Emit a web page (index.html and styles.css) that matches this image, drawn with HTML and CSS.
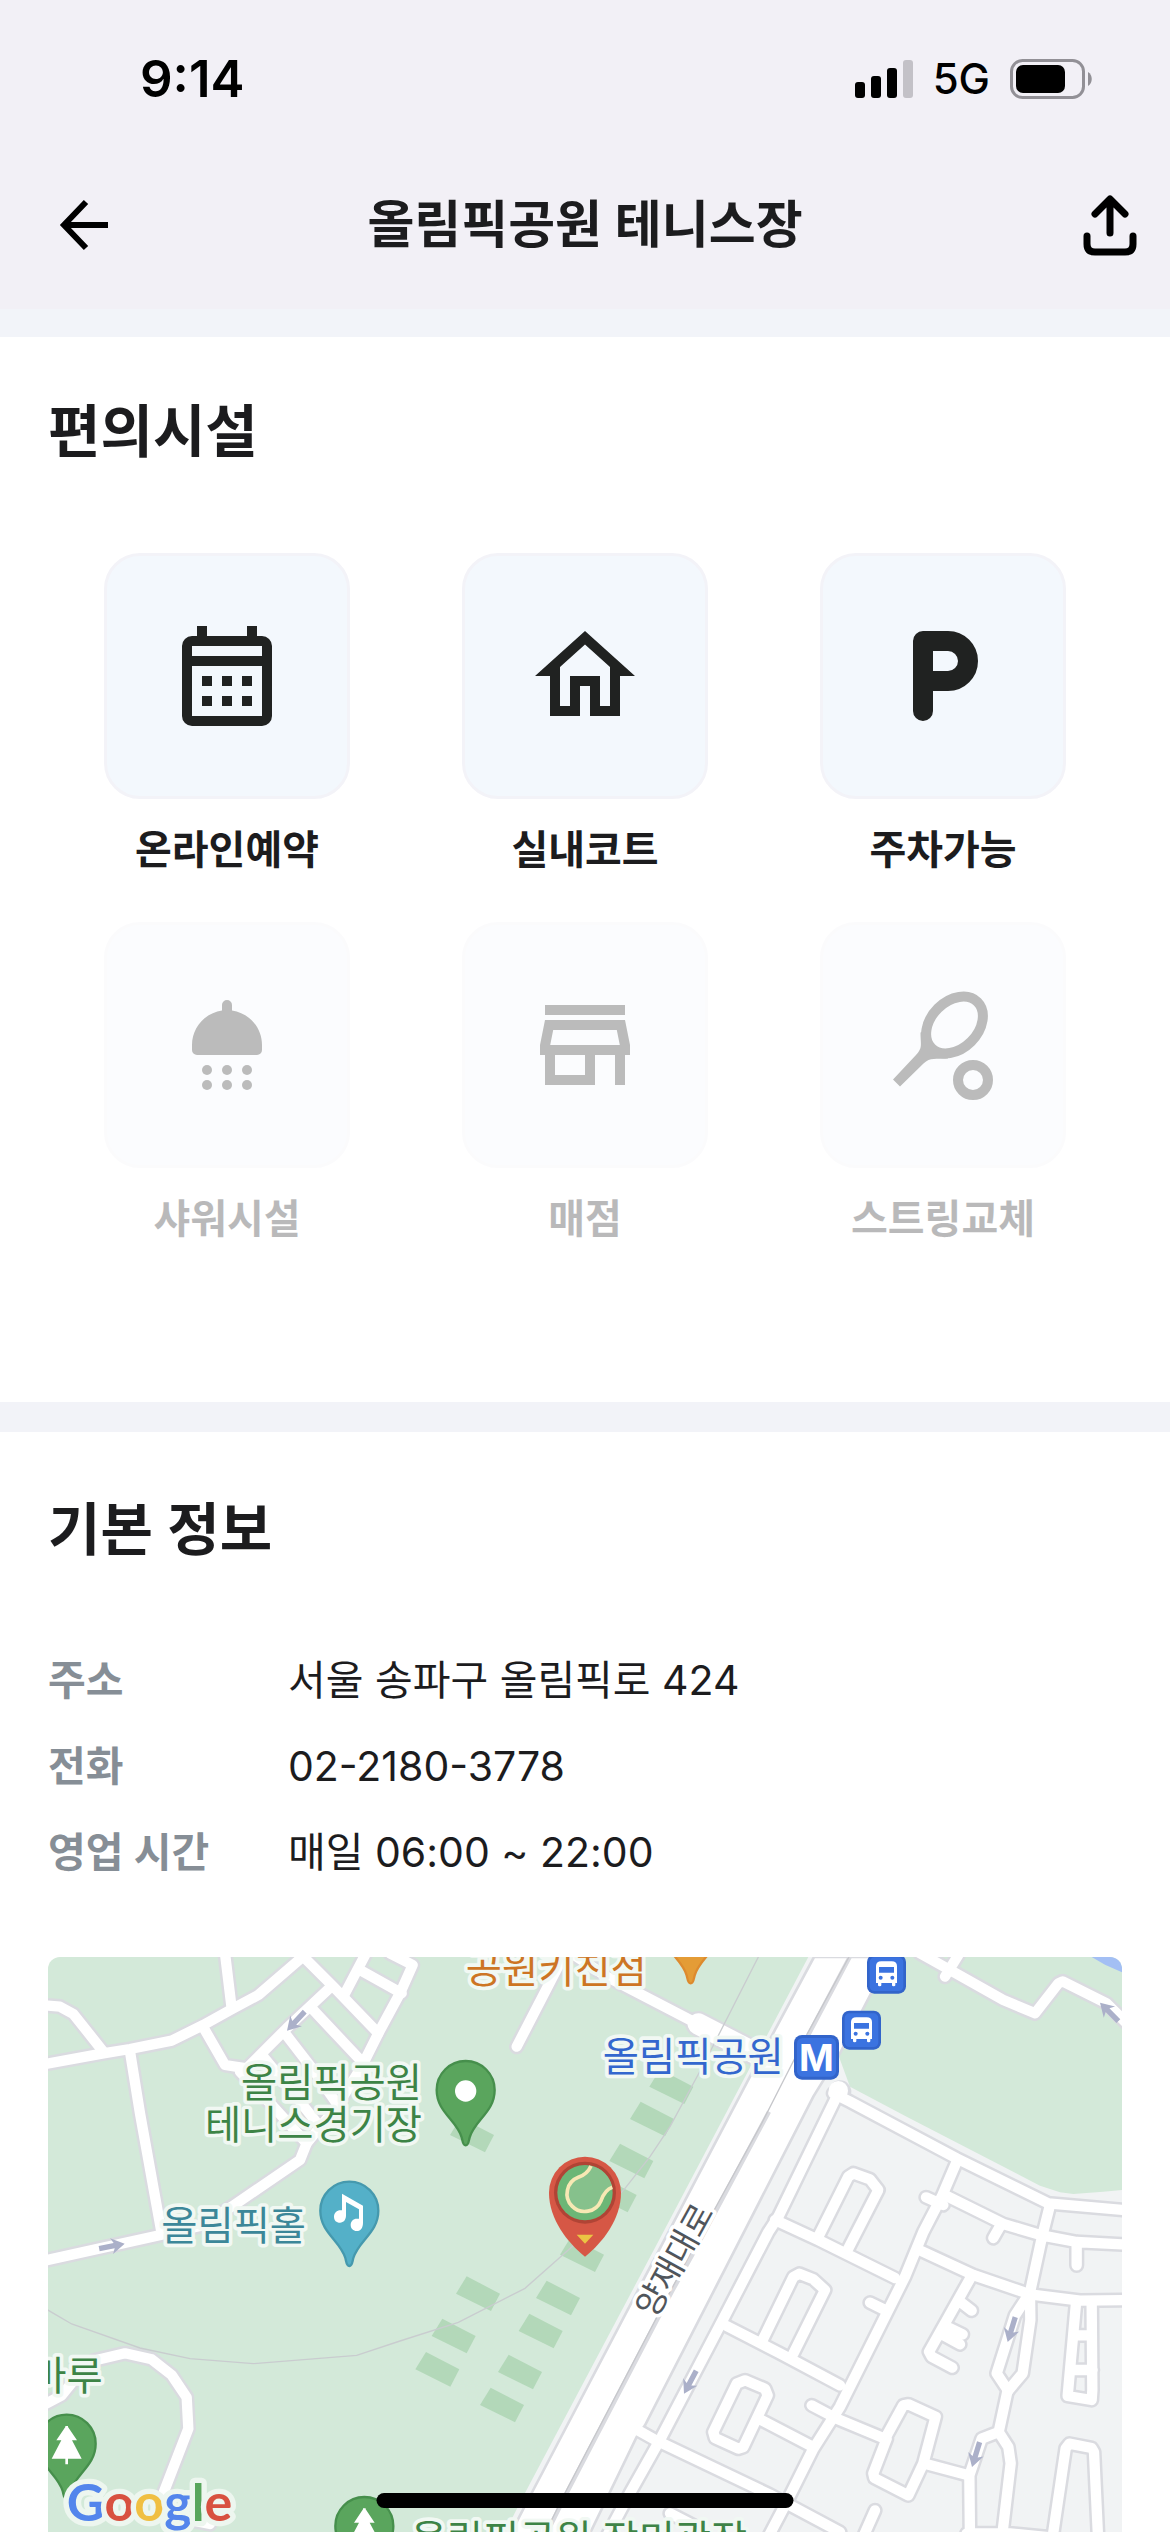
FILE: index.html
```html
<!DOCTYPE html>
<html lang="ko">
<head>
<meta charset="utf-8">
<meta name="viewport" content="width=device-width, initial-scale=1">
<title>올림픽공원 테니스장</title>
<link rel="stylesheet" href="styles.css">
</head>
<body>
<div class="status">
  <span class="time">9:14</span>
  <div class="indicators">
    <svg class="signal" viewBox="0 0 58 38" aria-hidden="true">
      <rect x="0" y="22" width="10" height="16" rx="3"/>
      <rect x="16" y="16" width="10" height="22" rx="3"/>
      <rect x="32" y="8" width="10" height="30" rx="3"/>
      <rect x="48" y="0" width="10" height="38" rx="3" fill="#c3c1c7"/>
    </svg>
    <span class="network">5G</span>
    <svg class="battery" viewBox="0 0 82 40" aria-hidden="true">
      <rect x="1.5" y="1.5" width="72" height="37" rx="11" fill="none" stroke="#929096" stroke-width="3"/>
      <rect x="6" y="6" width="49" height="28" rx="7"/>
      <path d="M78 13c5 3 5 11 0 14z" fill="#929096"/>
    </svg>
  </div>
</div>
<header class="nav">
  <button class="nav-button" aria-label="뒤로">
    <svg viewBox="0 0 56 56" fill="none" stroke="#000" stroke-width="6"><path d="M52 28H8M30 5 8 28l22 23"/></svg>
  </button>
  <h1>올림픽공원 테니스장</h1>
  <button class="nav-button share" aria-label="공유">
    <svg viewBox="0 0 56 62" fill="none" stroke="#000" stroke-width="7" stroke-linecap="round" stroke-linejoin="round"><path d="M28 39V6M13 20 28 5l15 15M5 42v8q0 8 8 8h30q8 0 8-8v-8"/></svg>
  </button>
</header>
<main>
  <section class="facilities">
    <h2>편의시설</h2>
    <ul class="facility-grid">
      <li class="facility">
        <div class="tile"><svg viewBox="0 0 24 24"><path fill-rule="evenodd" d="M6 2h2v2h8V2h2v2h1a2 2 0 0 1 2 2v14a2 2 0 0 1-2 2H5a2 2 0 0 1-2-2V6a2 2 0 0 1 2-2h1zM5 6v2h14V6zM5 10v10h14V10zM7 12h2v2H7zM11 12h2v2h-2zM15 12h2v2h-2zM7 16h2v2H7zM11 16h2v2h-2zM15 16h2v2h-2z"/></svg></div>
        <span>온라인예약</span>
      </li>
      <li class="facility">
        <div class="tile"><svg viewBox="0 0 24 24"><path d="M12 5.69 17 10.19V18h-2v-6H9v6H7v-7.81zM12 3 2 12h3v8h6v-6h2v6h6v-8h3z"/></svg></div>
        <span>실내코트</span>
      </li>
      <li class="facility">
        <div class="tile"><svg viewBox="0 0 24 24"><path d="M8 19V5h5a4 4 0 0 1 0 8H8" fill="none" stroke="#202221" stroke-width="4" stroke-linecap="round" stroke-linejoin="round"/></svg></div>
        <span>주차가능</span>
      </li>
      <li class="facility off">
        <div class="tile"><svg viewBox="0 0 24 24"><path d="M11 5.1V4a1 1 0 0 1 2 0v1.1c3.4.5 6 3.4 6 6.9v1a1 1 0 0 1-1 1H6a1 1 0 0 1-1-1v-1c0-3.500 2.600-6.400 6-6.900z"/><circle cx="8" cy="17" r="1"/><circle cx="12" cy="17" r="1"/><circle cx="16" cy="17" r="1"/><circle cx="8" cy="20" r="1"/><circle cx="12" cy="20" r="1"/><circle cx="16" cy="20" r="1"/></svg></div>
        <span>샤워시설</span>
      </li>
      <li class="facility off">
        <div class="tile"><svg viewBox="0 0 24 24"><path d="M18.360 9l.6 3H5.040l.6-3zM20 4H4v2h16zM20 7H4l-1 5v2h1v6h10v-6h4v6h2v-6h1v-2zM6 18v-4h6v4z"/></svg></div>
        <span>매점</span>
      </li>
      <li class="facility off">
        <div class="tile"><svg viewBox="0 0 24 24"><path d="M7.500 9.500C7.500 12 8 12.500 6.600 14L2 18.900 3.400 20.300 8.100 15.700C9.500 14.400 10.500 14.900 13 14.700L13 13.300 10 12.300 9 9z"/><g fill="none" stroke="#202221" stroke-width="2"><ellipse cx="14.300" cy="8" rx="6.500" ry="4.700" transform="rotate(-45 14.300 8)"/><circle cx="18" cy="19" r="3"/></g></svg></div>
        <span>스트링교체</span>
      </li>
    </ul>
  </section>
  <section class="info">
    <h2>기본 정보</h2>
    <dl>
      <dt>주소</dt><dd>서울 송파구 올림픽로 424</dd>
      <dt>전화</dt><dd>02-2180-3778</dd>
      <dt>영업 시간</dt><dd>매일 06:00 ~ 22:00</dd>
    </dl>
    <div class="map">
      <svg viewBox="24 51 3222 1725" preserveAspectRatio="xMinYMin slice" role="img" aria-label="지도">
        <defs>
          <g id="roads">
            <path d="M0 375 190 340 270 327 395 302 490 255 575 208 655 165 800 40"/>
            <path d="M0 195 60 200 100 222 190 335"/>
            <path d="M555 40 575 205M780 40 880 140 1015 280"/>
            <path d="M873 140 740 265 620 385 555 375 490 262M600 395 700 500 800 610"/>
            <path d="M815 205 975 375M735 280 820 390 890 490M670 350 760 460 840 560"/>
            <path d="M1050 40 1118 75 1080 160 1015 280 965 380 890 500 800 610 780 660 575 800 480 858 365 884 180 925 0 965"/>
            <path d="M978 40 915 160M960 90 1085 160M270 335 300 520 365 880"/>
            <path d="M1430 320 1580 30 1700 110 1960 245"/>
            <path d="M10 1395 65 1366 110 1310 160 1262 255 1240 335 1258 395 1305 440 1372 445 1466 372 1655 400 1730 510 1752"/>
            <path d="M2640 40 2730 90 2890 180 2985 220 3055 130 3068 124 3200 190 3265 255M2755 45 2715 110"/>
            <path d="M2380 460 2430 485 2750 655 3025 790 3260 811"/>
            <path d="M2385 480 2215 830 2185 876 2045 1146 1865 1490 1770 1659 1700 1790"/>
            <path d="M2205 840 2335 900 2565 1014M2335 890 2425 710 2440 700 2490 718 2515 750 2425 925"/>
            <path d="M2750 665 2705 770 2650 876 2595 1010 2400 1400 2320 1526 2240 1686 2180 1800"/>
            <path d="M2658 772 2710 795M2490 1088 2535 1110M2315 1396 2370 1425"/>
            <path d="M2720 768 2890 852 3005 886 3110 906 3260 914M3030 795 3005 895 2968 1066M2885 850 2860 894M3110 916V976"/>
            <path d="M2640 931 2800 1005 2970 1063 3120 1082 3260 1080"/>
            <path d="M2790 1016 2667 1235 2675 1250 2737 1283M2760 1085 2795 1112M2720 1160 2768 1183M2705 1183 2760 1213"/>
            <path d="M2955 1080 2925 1126 2870 1300 2905 1353M2970 1070 2971 1140 2948 1300 2902 1355 2876 1476 2825 1496 2788 1606 2790 1800M2876 1476 2905 1521 2912 1570 2885 1800M2780 1780 2910 1780 3050 1794"/>
            <path d="M3108 1090 3083 1368 3155 1380 3157 1350 3155 1090M3100 1186H3155M3095 1290H3158"/>
            <path d="M3038 1790 3077 1525 3088 1511 3155 1524 3162 1536 3174 1790"/>
            <path d="M2380 1432 2535 1496 2590 1396 2605 1393 2687 1430 2650 1570 2605 1666 2503 1614 2500 1600 2540 1496M2655 1571 2785 1606M2505 1711 2470 1790"/>
            <path d="M2060 1158 2220 1240 2400 1336M2165 1206 2260 1011 2278 1001 2320 1018 2355 1050 2260 1241"/>
            <path d="M2020 1476 2090 1331 2115 1321 2175 1346 2183 1366 2110 1521 2095 1526 2025 1494 2020 1476M2160 1438 2310 1516"/>
            <path d="M1780 1463 1850 1502 2190 1664 2400 1776M1890 1720 1960 1756"/>
          </g>
          <path id="court" d="M0 0 100 52 73 104-32 52z"/>
          <path id="pin" d="M0 166C-9 166-9 153-12 142-27 90-87 66-87 0a87 87 0 0 1 174 0C87 66 27 90 12 142 9 153 9 166 0 166z"/>
          <path id="tree" d="M-4-53H4V-50L31-10H16L45 45H4V62H-4V45H-45L-16-10H-31L-4-50z"/>
          <path id="arrow" d="M0 0-40-24-32-8H-78V8H-32L-40 24z"/>
          <g id="bus">
            <rect width="117" height="117" rx="22" fill="#3264ca"/>
            <rect x="8" y="8" width="101" height="101" rx="14" fill="#3b73e0"/>
            <path d="M27 85V34q0-14 16-14H74q16 0 16 14V85H85V92q0 3-5 3t-5-3V85H43V92q0 3-5 3t-5-3V85z" fill="#fff"/>
            <path d="M36 37H81V54H36z" fill="#3b73e0"/>
            <circle cx="41" cy="69" r="6" fill="#3b73e0"/><circle cx="76" cy="69" r="6" fill="#3b73e0"/>
          </g>
        </defs>
        <path fill="#d3e9d9" d="M24 51H3246V1776H24z"/>
        <path fill="#a3bff4" d="M3155 51H3246V97L3195 74z"/>
        <path fill="#f1f3f4" d="M2305 51 1870 876 1455 1659 1395 1776H3246V750L3190 755 3100 762 3060 757 3000 737 2600 530 2430 440 2395 345 2550 51z"/>
        <g fill="#b3d8b9">
          <use href="#court" x="1280" y="1009"/><use href="#court" x="1207" y="1136"/><use href="#court" x="1158" y="1236"/>
          <use href="#court" x="1520" y="1022"/><use href="#court" x="1468" y="1121"/><use href="#court" x="1406" y="1244"/>
          <use href="#court" x="1352" y="1343"/><use href="#court" x="1592" y="892"/><use href="#court" x="1860" y="388"/>
          <use href="#court" x="1802" y="485"/><use href="#court" x="1740" y="611"/><use href="#court" x="1690" y="713"/>
          <use href="#court" x="1262" y="533"/>
        </g>
        <path class="casing" d="M1975 252 2200 368" stroke-width="78"/>
        <use href="#roads" class="casing" stroke-width="46"/>
        <circle cx="2400" cy="455" r="34" fill="#dadbe0"/>
        <path d="M2322 51 2135 400 1475 1659 1412 1780H1650L1790 1491 1815 1456 2320 470 2400 340 2550 51z" fill="#fff" stroke="#dadbe0" stroke-width="8"/>
        <path class="fill" d="M1975 252 2200 368" stroke-width="64"/>
        <use href="#roads" class="fill" stroke-width="31"/>
        <circle cx="2395" cy="452" r="29" fill="#fff"/>
        <g fill="none">
          <path d="M2435 40 2305 285M2187 515 1965 930 1895 1056 1580 1659 1520 1780" stroke="#dadbe0" stroke-width="13"/>
          <path d="M2430 45 2300 285 2165 550 1965 915 1890 1056 1575 1659 1515 1780" stroke="#c6c7cb" stroke-width="4"/>
          <path d="M2158 45 1990 375 1890 560 1830 650 1755 745 1595 921 1455 1045 1255 1147 1080 1203 950 1246 640 1271 450 1256 300 1224 95 1152 20 1108" stroke="#c9cccf" stroke-width="4"/>
        </g>
        <g fill="#abb0c9">
          <use href="#arrow" transform="translate(741 272) rotate(133)"/>
          <use href="#arrow" transform="translate(3180 188) rotate(225)"/>
          <use href="#arrow" transform="translate(254 911) rotate(-11)"/>
          <use href="#arrow" transform="translate(1932 1361) rotate(118)"/>
          <use href="#arrow" transform="translate(2903 1206) rotate(107)"/>
          <use href="#arrow" transform="translate(2796 1581) rotate(107)"/>
        </g>
        <g class="labels">
          <text x="1549" y="128" text-anchor="middle" fill="#cd7524">공원키친점</text>
          <text x="1960" y="392" text-anchor="middle" fill="#3367ce">올림픽공원</text>
          <text x="1146" y="472" text-anchor="end" fill="#3d8446">올림픽공원</text>
          <text x="1146" y="598" text-anchor="end" fill="#3d8446">테니스경기장</text>
          <text x="798" y="900" text-anchor="end" fill="#3c8799">올림픽홀</text>
          <text x="188" y="1351" text-anchor="end" fill="#3d8446">마루</text>
          <text x="1112" y="1843" fill="#3d8446">올림픽공원 장미광장</text>
          <text class="street" transform="translate(1903 960) rotate(-61)" y="36" text-anchor="middle" fill="#50555b">양재대로</text>
        </g>
        <g stroke-width="7">
          <use href="#pin" x="1277" y="450" fill="#5aa55d" stroke="#468f4c"/>
          <use href="#pin" x="928" y="812" fill="#54b0c8" stroke="#4599ae"/>
          <use href="#pin" x="80" y="1511" fill="#5aa55d" stroke="#468f4c"/>
          <use href="#pin" x="973" y="1758" fill="#5aa55d" stroke="#468f4c"/>
          <use href="#pin" x="1952" y="-36" fill="#e49c36" stroke="#dd8a2e"/>
        </g>
        <g fill="#fff">
          <circle cx="1277" cy="453" r="32"/>
          <path d="M906 761 969 797V848C969 862 963 873 950 873 940 873 932 866 932 855 932 844 940 836 950 836H957V808L918 786V826C918 840 911 848 900 848 889 848 882 841 882 830 882 819 891 811 901 811H906z"/>
          <use href="#tree" x="80" y="1511"/>
          <use href="#tree" x="973" y="1758"/>
        </g>
        <use href="#bus" x="2481" y="44"/>
        <use href="#bus" x="2406" y="212"/>
        <rect x="2262" y="285" width="135" height="134" rx="24" fill="#3264ca"/>
        <rect x="2271" y="294" width="117" height="116" rx="16" fill="#3b73e0"/>
        <text class="metro" x="2329" y="392" text-anchor="middle">M</text>
        <g transform="translate(1635 758)">
          <path d="M0 192C-52 150-108 80-108 0a108 108 0 0 1 216 0C108 80 52 150 0 192z" fill="#d65745"/>
          <circle r="93" fill="#b04435"/>
          <circle r="83" fill="#6cb676"/>
          <path d="M18-81A83 83 0 0 1 82-15C60-8 55 5 48 23A52 52 0 1 1-20-46C0-53 10-62 18-81z" fill="#86c18c"/>
          <path d="M18-80C10-62 0-53-20-46A53 53 0 1 0 48 24C55 5 64-10 82-16" fill="none" stroke="#f7e8b4" stroke-width="11"/>
          <path d="M-25 126H25L0 153z" fill="#ebc443"/>
        </g>
        <text class="google" x="80" y="1743"><tspan fill="#5385ec">G</tspan><tspan fill="#d85140">o</tspan><tspan fill="#f0bf42">o</tspan><tspan fill="#5385ec">g</tspan><tspan fill="#58a55c">l</tspan><tspan fill="#d85140">e</tspan></text>
      </svg>
    </div>
  </section>
</main>
<div class="home-indicator"></div>
</body>
</html>
```
FILE: styles.css
```css
* { box-sizing: border-box; }

body {
  margin: 0;
  min-height: 100vh;
  display: flex;
  flex-direction: column;
  background: #fff;
  color: #1c1c1e;
  font-family: Inter, "Noto Sans CJK KR", sans-serif;
}

h1, h2, ul, dl, dd { margin: 0; padding: 0; }

svg { display: block; }

.status {
  display: flex;
  justify-content: space-between;
  align-items: center;
  height: 141px;
  padding: 16px 78px 0 140px;
  background: #f2f0f6;
  color: #000;
}

.time { font-size: 51px; font-weight: 600; line-height: 60px; }

.indicators { display: flex; align-items: center; gap: 20px; }

.signal { width: 58px; height: 38px; }

.network { font-size: 42px; font-weight: 500; line-height: 60px; }

.battery { width: 82px; height: 40px; }

.nav {
  display: flex;
  justify-content: space-between;
  align-items: center;
  height: 168px;
  padding: 0 32px 0 56px;
  background: #f2f0f6;
}

.nav h1 {
  flex: 1;
  padding-left: 24px;
  padding-right: 48px;
  text-align: center;
  font-size: 51px;
  font-weight: 600;
  line-height: 80px;
}

.nav-button {
  padding: 0;
  border: 0;
  background: none;
}

.nav-button svg { width: 56px; height: 56px; }

.share svg { height: 62px; }

main {
  flex: 1;
  display: flex;
  flex-direction: column;
}

.facilities {
  padding: 55px 48px 154px;
  border-top: 28px solid #f2f4f9;
}

h2 { font-size: 57px; font-weight: 600; line-height: 80px; }

.facility-grid {
  display: grid;
  grid-template-columns: repeat(3, 1fr);
  row-gap: 43px;
  margin-top: 81px;
  list-style: none;
}

.facility {
  display: flex;
  flex-direction: column;
  align-items: center;
  gap: 22px;
  font-size: 40px;
  font-weight: 600;
  line-height: 58px;
}

.tile {
  display: flex;
  align-items: center;
  justify-content: center;
  width: 246px;
  height: 246px;
  border: 3px solid #f3f3f8;
  border-radius: 36px;
  background: #f3f8fd;
}

.tile svg { width: 120px; height: 120px; fill: #202221; }

.off { opacity: 0.3; }

.info {
  flex: 1;
  display: flex;
  flex-direction: column;
  padding: 58px 48px 0;
  border-top: 30px solid #f2f3f8;
}

dl {
  display: grid;
  grid-template-columns: 240px 1fr;
  row-gap: 26px;
  margin-top: 80px;
  font-size: 41px;
  line-height: 60px;
}

dt { color: #868e96; font-weight: 600; }

.map {
  flex: 1;
  min-height: 400px;
  margin-top: 75px;
  border-radius: 12px 12px 0 0;
  overflow: hidden;
  position: relative;
}

.map > svg { position: absolute; width: 100%; height: 100%; }

.casing { fill: none; stroke: #dadbe0; stroke-linejoin: round; stroke-linecap: round; }

.fill { fill: none; stroke: #fff; stroke-linejoin: round; stroke-linecap: round; }

.labels {
  font-family: "Noto Sans CJK KR", sans-serif;
  font-size: 118px;
  paint-order: stroke;
  stroke: #f1f8f3;
  stroke-width: 22px;
  stroke-linejoin: round;
}

.street { font-size: 100px; stroke: #fff; }

.metro { font-family: Inter, sans-serif; font-size: 112px; font-weight: 700; fill: #fff; }

.google {
  font-family: Lato, sans-serif;
  font-size: 156px;
  font-weight: 700;
  paint-order: stroke;
  stroke: #edf6ef;
  stroke-width: 32px;
  stroke-linejoin: round;
}

.home-indicator {
  position: fixed;
  bottom: 24px;
  left: 50%;
  width: 417px;
  height: 15px;
  border-radius: 8px;
  background: #000;
  transform: translateX(-50%);
}
```
